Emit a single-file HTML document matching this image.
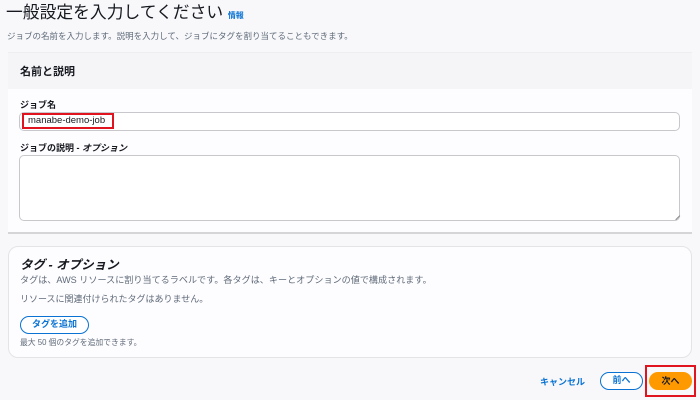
<!DOCTYPE html>
<html><head><meta charset="utf-8"><style>
*{margin:0;padding:0;box-sizing:border-box}
body{width:700px;height:400px;background:#f8f8fa;font-family:"Liberation Sans","Noto Sans CJK JP",sans-serif;color:#16191f;position:relative;overflow:hidden}
.a{position:absolute;white-space:nowrap}
</style></head><body>
<div class="a" style="left:6px;top:2px;font-size:16.8px;line-height:22px;color:#16191f">一般設定を入力してください <span style="font-size:8px;color:#0972d3;font-weight:bold">情報</span></div>
<div class="a" style="left:7px;top:30px;font-size:8.5px;color:#5f6b7a">ジョブの名前を入力します。説明を入力して、ジョブにタグを割り当てることもできます。</div>

<div class="a" style="left:8px;top:52px;width:684px;height:182px;background:#fdfcfe;border-top:1px solid #eee;border-bottom:2px solid #d5d5d8">
 <div style="height:36px;background:#f5f5f7"></div>
</div>
<div class="a" style="left:20px;top:63px;font-size:11px;font-weight:bold">名前と説明</div>
<div class="a" style="left:20px;top:98px;font-size:9px;font-weight:bold">ジョブ名</div>
<div class="a" style="left:19px;top:112px;width:661px;height:19px;border:1px solid #c8c8cc;border-radius:5px;background:#fff"></div>
<div class="a" style="left:22px;top:113px;width:92px;height:16px;border:2px solid #e0141e;font-size:9.5px;line-height:12px;padding-left:4px;color:#16191f">manabe-demo-job</div>
<div class="a" style="left:20px;top:141px;font-size:9px;font-weight:bold">ジョブの説明 - <i>オプション</i></div>
<div class="a" style="left:19px;top:155px;width:661px;height:66px;border:1px solid #c8c8cc;border-radius:5px;background:#fff"></div>
<div class="a" style="left:673px;top:213px;width:6px;height:6px;border-bottom:1px solid #888;transform:rotate(-45deg)"></div>

<div class="a" style="left:8px;top:246px;width:684px;height:112px;background:#fdfcfe;border:1px solid #e4e4e8;border-radius:10px"></div>
<div class="a" style="left:20px;top:254px;font-size:12.5px;font-weight:bold;font-style:italic">タグ - オプション</div>
<div class="a" style="left:20px;top:272px;font-size:9.1px;color:#5f6b7a">タグは、AWS リソースに割り当てるラベルです。各タグは、キーとオプションの値で構成されます。</div>
<div class="a" style="left:20px;top:292px;font-size:9px;color:#5f6b7a">リソースに関連付けられたタグはありません。</div>
<div class="a" style="left:20px;top:316px;width:69px;height:18px;border:1.5px solid #0972d3;border-radius:9px;font-size:9px;font-weight:bold;color:#0972d3;text-align:center;line-height:15px;background:#fff">タグを追加</div>
<div class="a" style="left:20px;top:337px;font-size:7.8px;color:#5f6b7a">最大 50 個のタグを追加できます。</div>

<div class="a" style="left:540px;top:375px;font-size:9px;font-weight:bold;color:#0972d3">キャンセル</div>
<div class="a" style="left:600px;top:372px;width:43px;height:18px;border:1.5px solid #0972d3;border-radius:9px;font-size:9px;font-weight:bold;color:#0972d3;text-align:center;line-height:15px;background:#fff">前へ</div>
<div class="a" style="left:645px;top:365px;width:51px;height:32px;border:2px solid #e0141e"></div>
<div class="a" style="left:649px;top:372px;width:43px;height:18px;border-radius:9px;background:#ff9900;font-size:9px;font-weight:bold;color:#16191f;text-align:center;line-height:18px">次へ</div>
</body></html>
